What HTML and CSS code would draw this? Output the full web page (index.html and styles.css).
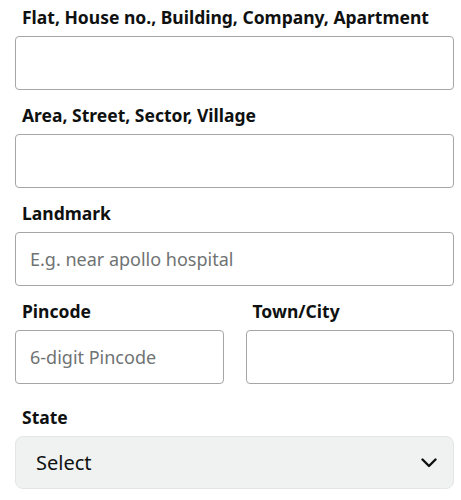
FILE: index.html
```html
<!DOCTYPE html>
<html lang="en">
<head>
<meta charset="utf-8">
<title>Address form</title>
<link rel="stylesheet" href="styles.css">
</head>
<body>
<form class="form">
  <div class="field">
    <label class="label" for="flat">Flat, House no., Building, Company, Apartment</label>
    <input class="input" id="flat" type="text">
  </div>
  <div class="field">
    <label class="label" for="area">Area, Street, Sector, Village</label>
    <input class="input" id="area" type="text">
  </div>
  <div class="field">
    <label class="label" for="landmark">Landmark</label>
    <input class="input" id="landmark" type="text" placeholder="E.g. near apollo hospital">
  </div>
  <div class="row">
    <div class="field">
      <label class="label" for="pin">Pincode</label>
      <input class="input" id="pin" type="text" placeholder="6-digit Pincode">
    </div>
    <div class="field">
      <label class="label" for="city">Town/City</label>
      <input class="input" id="city" type="text">
    </div>
  </div>
  <div class="field field-state">
    <label class="label">State</label>
    <div class="select">
      <span class="select-text">Select</span>
      <svg class="chevron" width="16" height="10" viewBox="0 0 16 10"><path d="M1.5 1.5 L8 8 L14.5 1.5" fill="none" stroke="#0f1111" stroke-width="2.4" stroke-linecap="round" stroke-linejoin="round"/></svg>
    </div>
  </div>
</form>
</body>
</html>
```
FILE: styles.css
```css
* { box-sizing: border-box; }
html, body { margin: 0; padding: 0; background: #fff; }
body {
  font-family: "Noto Sans", "Open Sans", sans-serif;
  color: #0f1111;
}
.form {
  padding: 6px 7px 0 15px;
  display: flex;
  flex-direction: column;
  gap: 14px;
}
.field {
  display: flex;
  flex-direction: column;
  min-width: 0;
}
.label {
  font-size: 17.5px;
  font-weight: 700;
  line-height: 22px;
  padding-left: 7px;
  margin-bottom: 8px;
  white-space: nowrap;
}
.input {
  height: 54px;
  width: 100%;
  border: 1px solid #a6a6a6;
  border-radius: 4px;
  padding: 0 14px;
  font-family: inherit;
  font-size: 18px;
  color: #0f1111;
  background: #fff;
  outline: none;
}
.input::placeholder { color: #6f7373; opacity: 1; }
.row {
  display: grid;
  grid-template-columns: 1fr 1fr;
  column-gap: 22px;
}
.field-state { margin-top: 8px; }
.select {
  height: 53px;
  border: 1px solid #e3e6e6;
  border-radius: 8px;
  background: #f0f2f2;
  display: flex;
  align-items: center;
  justify-content: space-between;
  padding: 0 16px 0 20px;
}
.select-text { font-size: 20px; line-height: 24px; }
.chevron { display: block; }
```
